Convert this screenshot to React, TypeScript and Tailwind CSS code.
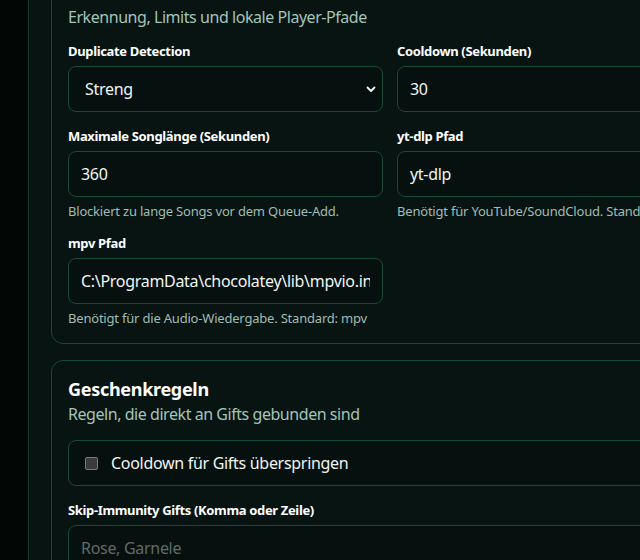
import React from "react";

const FONT = "font-['Segoe_UI','Noto_Sans','Open_Sans',sans-serif]";

function Label({ children }: { children: React.ReactNode }) {
  return (
    <div className="text-[13px] leading-5 font-bold tracking-[-0.35px] text-white mb-[5px]">
      {children}
    </div>
  );
}

function Help({ children }: { children: React.ReactNode }) {
  return (
    <p className="mt-[6px] text-[13px] leading-4 tracking-[-0.2px] text-[#a1bcb3] whitespace-nowrap">
      {children}
    </p>
  );
}

const inputCls =
  "w-full h-[46px] rounded-lg border border-[#184a33] bg-[#06110f] px-3 text-base tracking-[-0.3px] text-[#f0f5f3] outline-none";

function Field({
  label,
  value,
  help,
}: {
  label: string;
  value: string;
  help?: string;
}) {
  return (
    <div className="min-w-0">
      <Label>{label}</Label>
      <input className={inputCls} defaultValue={value} />
      {help && <Help>{help}</Help>}
    </div>
  );
}

export default function App() {
  return (
    <div className={`w-[640px] h-[560px] overflow-hidden flex bg-[#020504] ${FONT}`}>
      {/* sidebar edge */}
      <div className="w-[29px] shrink-0 bg-[#020605] border-r border-[#123a28]" />

      {/* main */}
      <main className="flex-1 min-w-0 bg-[#071412] pl-[22px]">
        <div className="w-[678px] space-y-4">
          {/* Player settings card */}
          <section className="-mt-[12px] rounded-xl border border-[#184a33] px-4 pb-[17px] pt-[16px]">
            <p className="text-base leading-6 tracking-[-0.45px] text-[#a3c4b8] mb-3">
              Erkennung, Limits und lokale Player-Pfade
            </p>
            <div className="grid grid-cols-2 gap-[14px]">
              <div className="min-w-0">
                <Label>Duplicate Detection</Label>
                <div className="relative">
                  <select
                    className={`${inputCls} appearance-none pl-4 pr-8`}
                    defaultValue="streng"
                  >
                    <option value="streng">Streng</option>
                    <option value="locker">Locker</option>
                    <option value="aus">Aus</option>
                  </select>
                  <svg
                    className="pointer-events-none absolute right-[7px] top-1/2 -translate-y-1/2"
                    width="10"
                    height="10"
                    viewBox="0 0 10 10"
                    fill="none"
                  >
                    <path d="M1.5 3.5 5 7l3.5-3.5" stroke="#f5f5f5" strokeWidth="1.8" strokeLinecap="round" strokeLinejoin="round" />
                  </svg>
                </div>
              </div>
              <Field label="Cooldown (Sekunden)" value="30" />
              <Field
                label="Maximale Songlänge (Sekunden)"
                value="360"
                help="Blockiert zu lange Songs vor dem Queue-Add."
              />
              <Field
                label="yt-dlp Pfad"
                value="yt-dlp"
                help="Benötigt für YouTube/SoundCloud. Standard: yt-dlp"
              />
              <Field
                label="mpv Pfad"
                value="C:\ProgramData\chocolatey\lib\mpvio.install\tools\mpv.exe"
                help="Benötigt für die Audio-Wiedergabe. Standard: mpv"
              />
            </div>
          </section>

          {/* Gift rules card */}
          <section className="rounded-xl border border-[#184a33] p-4">
            <h2 className="text-lg leading-6 font-bold tracking-[-0.3px] text-white">Geschenkregeln</h2>
            <p className="mt-[1px] text-base leading-6 tracking-[-0.45px] text-[#a3c4b8] mb-[14px]">
              Regeln, die direkt an Gifts gebunden sind
            </p>
            <label className="flex items-center gap-[13px] h-[46px] rounded-lg border border-[#184a33] bg-[#06110f] px-4 mb-[14px]">
              <span className="w-[13px] h-[13px] rounded-[2px] border border-[#7a7a7a] bg-[#3b3b3b]" />
              <span className="text-base tracking-[-0.3px] text-[#f0f5f3]">Cooldown für Gifts überspringen</span>
            </label>
            <Label>Skip-Immunity Gifts (Komma oder Zeile)</Label>
            <textarea
              className="w-full h-[90px] rounded-lg border border-[#184a33] bg-[#06110f] px-3 py-[10px] text-base tracking-[-0.3px] text-[#f0f5f3] placeholder:text-[#5f6b69] outline-none resize-none"
              placeholder="Rose, Garnele"
            />
          </section>
        </div>
      </main>
    </div>
  );
}
